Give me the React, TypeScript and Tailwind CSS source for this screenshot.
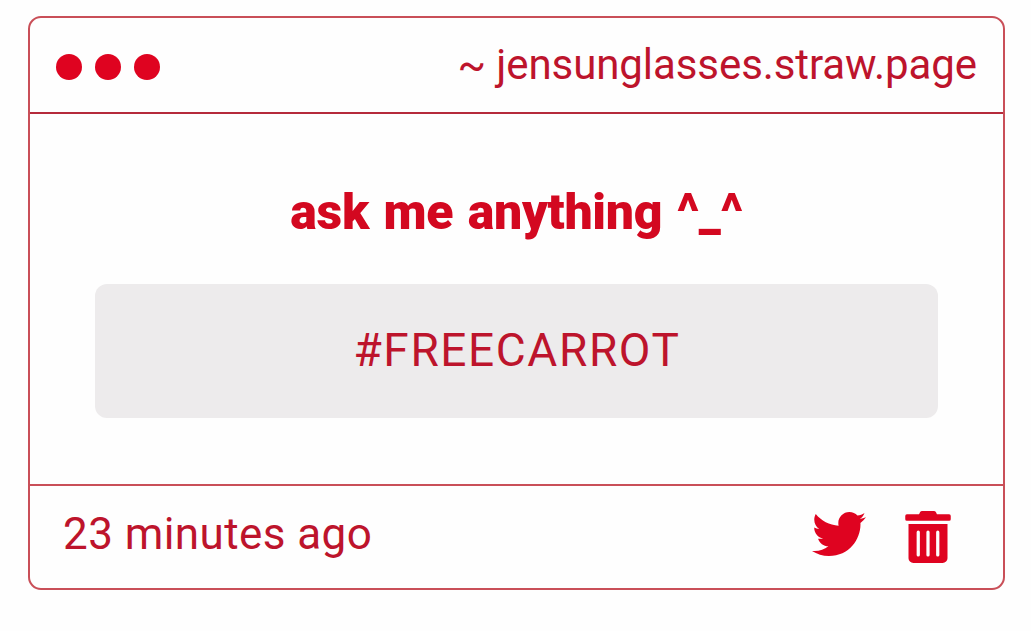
import { FaTrashAlt, FaTwitter } from "react-icons/fa";

const WindowDots = () => {
  return (
    <div className="flex gap-[13px]">
      <span className="size-[26px] rounded-full bg-[#df0320]" />
      <span className="size-[26px] rounded-full bg-[#df0320]" />
      <span className="size-[26px] rounded-full bg-[#df0320]" />
    </div>
  );
};

export default function App() {
  return (
    <div className="h-[631px] w-full overflow-hidden bg-[#fefefe] pt-4 pl-7 font-['Roboto',sans-serif] text-[#bd142c]">
      <div className="flex h-[574px] w-[977px] flex-col rounded-[13px] border-2 border-[#c94f58]">
        <header className="flex h-24 items-center justify-between border-b-2 border-[#b52a3b] px-[26px] pt-[3px]">
          <WindowDots />
          <span className="pb-[3px] text-[42px] leading-none tracking-[-0.08px] whitespace-nowrap">
            ~ jensunglasses.straw.page
          </span>
        </header>
        <main className="flex flex-1 flex-col items-center pt-[68px]">
          <h1 className="text-[50px] leading-[60px] font-black tracking-[-0.3px] whitespace-nowrap text-[#d30820] [word-spacing:2.4px]">
            ask me anything ^_^
          </h1>
          <div className="mt-[42px] flex h-[134px] w-[843px] items-center justify-center rounded-xl bg-[#edebec]">
            <p className="pb-0.5 pl-px text-[46px] leading-none tracking-[1.6px]">
              #FREECARROT
            </p>
          </div>
        </main>
        <footer className="flex h-[104px] items-center justify-between border-t-2 border-[#c94f58] pr-[52px] pl-[33px]">
          <span className="pb-[7px] text-[44px] leading-none tracking-[0.42px] whitespace-nowrap">
            23 minutes ago
          </span>
          <div className="flex items-start gap-[39px] text-[#df0320]">
            <FaTwitter className="-mt-1 size-[54px]" />
            <FaTrashAlt className="h-[52px] w-[46px]" />
          </div>
        </footer>
      </div>
    </div>
  );
}
